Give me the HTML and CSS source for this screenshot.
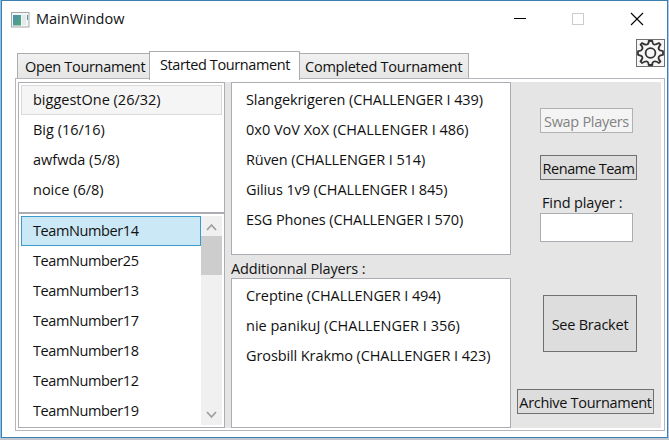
FILE: index.html
```html
<!DOCTYPE html>
<html lang="en">
<head>
<meta charset="utf-8">
<title>MainWindow</title>
<link rel="stylesheet" href="styles.css">
</head>
<body>
<div class="window">
  <header class="titlebar">
    <svg class="app-icon" width="19" height="16" viewBox="0 0 19 16">
      <defs><linearGradient id="g" x1="0" y1="0" x2="1" y2="1"><stop offset="0" stop-color="#4a8fb0"/><stop offset="1" stop-color="#55a878"/></linearGradient></defs>
      <rect x=".5" y=".5" width="17.5" height="14.5" fill="#f4f6f7" stroke="#a3a8ab"/>
      <rect x="2" y="3" width="8" height="10.500" fill="url(#g)"/>
      <rect x="11" y="3" width="4" height="10" fill="#e4e9ee"/>
      <rect x="16" y="3" width="1" height="5" fill="#5b9a8c"/>
    </svg>
    <span class="caption">MainWindow</span>
    <svg class="controls" width="132" height="14" viewBox="0 0 132 14">
      <path d="M1 6.500h12" stroke="#000"/>
      <rect x="59.500" y="1.500" width="11" height="11" fill="none" stroke="#ccc"/>
      <path d="M118 1l12 12M130 1l-12 12" stroke="#000" stroke-width="1.100"/>
    </svg>
  </header>
  <button class="settings" aria-label="Settings">
    <svg width="27" height="26" viewBox="-13.500 -13 27 26">
      <path fill="none" stroke="#333" stroke-width="1.800" stroke-linejoin="round" d="M-1.800 -12H1.800Q2 -9 3.500 -8.500T8.500 -10L10 -8.300Q7.600 -5.500 8.200 -4T12.500 -1.800V1.800Q9 2 8.200 4T10 8.300L8.500 10Q5.500 7.800 3.500 8.500T1.800 12H-1.800Q-2 9 -3.500 8.500T-8.500 10L-10 8.300Q-7.600 5.500 -8.200 4T-12.500 1.800V-1.800Q-9 -2 -8.200 -4T-10 -8.300L-8.500 -10Q-5.500 -7.800 -3.500 -8.500T-1.800 -12Z"/>
      <circle r="4.900" fill="none" stroke="#333" stroke-width="1.800"/>
    </svg>
  </button>
  <nav class="tabs">
    <div class="tab tab-open"><span>Open Tournament</span></div>
    <div class="tab active"><span>Started Tournament</span></div>
    <div class="tab tab-done"><span>Completed Tournament</span></div>
  </nav>
  <main class="panel">
    <div class="content">
      <section class="left">
        <ul class="list tournaments">
          <li class="inactive-selected"><span>biggestOne (26/32)</span></li><li><span>Big (16/16)</span></li><li><span>awfwda (5/8)</span></li><li><span>noice (6/8)</span></li>
        </ul>
        <div class="list teams">
          <ul class="team-items">
            <li class="selected"><span>TeamNumber14</span></li><li><span>TeamNumber25</span></li><li><span>TeamNumber13</span></li><li><span>TeamNumber17</span></li><li><span>TeamNumber18</span></li><li><span>TeamNumber12</span></li><li><span>TeamNumber19</span></li>
          </ul>
          <div class="scrollbar">
            <svg width="21" height="20" viewBox="0 0 21 20"><path d="M6 14l4.500-5 4.500 5" fill="none" stroke="#a0a0a0" stroke-width="1.800"/></svg>
            <div class="thumb"></div>
            <svg class="down" width="21" height="21" viewBox="0 0 21 21"><path d="M6 8l4.500 5 4.500-5" fill="none" stroke="#a0a0a0" stroke-width="1.800"/></svg>
          </div>
        </div>
      </section>
      <section class="middle">
        <ul class="list players">
          <li><span>Slangekrigeren (CHALLENGER I 439)</span></li><li class="wide"><span>0x0 VoV XoX (CHALLENGER I 486)</span></li><li><span>Rüven (CHALLENGER I 514)</span></li><li><span>Gilius 1v9 (CHALLENGER I 845)</span></li><li><span>ESG Phones (CHALLENGER I 570)</span></li>
        </ul>
        <div class="label"><span>Additionnal Players :</span></div>
        <ul class="list extras">
          <li><span>Creptine (CHALLENGER I 494)</span></li><li class="wide"><span>nie panikuJ (CHALLENGER I 356)</span></li><li><span>Grosbill Krakmo (CHALLENGER I 423)</span></li>
        </ul>
      </section>
      <section class="actions">
        <button class="btn swap" disabled><span>Swap Players</span></button>
        <button class="btn rename"><span>Rename Team</span></button>
        <label class="find" for="find"><span>Find player :</span></label>
        <input id="find" class="search" type="text">
        <button class="btn bracket"><span>See Bracket</span></button>
        <button class="btn archive"><span>Archive Tournament</span></button>
      </section>
    </div>
  </main>
</div>
</body>
</html>
```
FILE: styles.css
```css
* { box-sizing: border-box; }
body { margin: 0; width: 669px; height: 440px; overflow: hidden; background: linear-gradient(90deg, #8fc0ea 0 50%, #b3c8e4 50%); padding-left: 1px; border-bottom: 2px solid #c3c5cf; font: 14.5px/20px "Open Sans", "Noto Sans", sans-serif; color: #111; }
button, input { font: inherit; color: inherit; margin: 0; padding: 0; border-radius: 0; }
span { white-space: nowrap; }
ul { list-style: none; margin: 0; padding: 0; }
.window { position: relative; width: 667px; height: 438px; border: 1px solid #3b7fb0; background: #fff; }
.titlebar { display: flex; align-items: center; height: 36px; padding-left: 9px; }
.app-icon { margin-top: 1px; }
.caption { margin-left: 6px; }
.controls { margin-left: auto; margin-right: 22px; }
.settings { position: absolute; left: 634px; top: 38px; width: 29px; height: 28px; border: 1px solid #707070; background: #f6f6f6; display: block; }
.settings svg { display: block; }
.tabs { display: flex; align-items: flex-end; height: 42px; padding-left: 15px; }
.tab { height: 26px; border: 1px solid #acacac; border-bottom: 0; background: linear-gradient(#f1f1f1, #e5e5e5); display: flex; align-items: center; padding: 1px 0 0 7px; }
.tab-open { width: 133px; letter-spacing: -0.32px; }
.active { position: relative; z-index: 1; width: 151px; height: 29px; margin: 0 -1px -1px; background: #fff; padding: 0 0 2px 10px; letter-spacing: -0.4px; }
.tab-done { width: 170px; padding-left: 5px; letter-spacing: -0.23px; }
.panel { margin-left: 13px; margin-top: -1px; width: 650px; height: 353px; border: 1px solid #b5b5bb; padding: 3px 2px; position: relative; }
.content { display: grid; grid-template-columns: 207px 280px 1fr; column-gap: 6px; height: 346px; width: 643px; background: #e5e5e5; }
.list { background: #fff; border: 1px solid #abadb3; padding: 2px; }
.list li { height: 30px; padding: 5px 0 0 12px; }
.left, .middle { display: flex; flex-direction: column; }
.tournaments { height: 131px; }
.list .inactive-selected { background: #f5f5f5; border: 1px solid #dadada; padding: 4px 0 0 11px; }
.teams { display: flex; height: 215px; padding: 2px; overflow: hidden; }
.team-items { width: 180px; letter-spacing: -0.4px; }
.list .selected { background: #cbe8f6; border: 1px solid #3a9bcb; padding: 4px 0 0 11px; }
.scrollbar { width: 21px; height: 209px; background: #f0f0f0; display: flex; flex-direction: column; }
.thumb { height: 39px; background: #cdcdcd; }
.down { margin-top: auto; }
.middle { letter-spacing: -0.1px; }
.wide { letter-spacing: 0; }
.players { height: 173px; }
.label { height: 23px; padding-top: 4px; letter-spacing: -0.16px; }
.extras { height: 149px; height: 150px; }
.actions { display: flex; flex-direction: column; align-items: flex-start; padding: 26px 0 0 23px; }
.btn { display: flex; align-items: center; justify-content: center; height: 25px; border: 1px solid #707070; background: #ddd; padding-top: 2px; letter-spacing: -0.3px; }
.swap { width: 93px; background: #f4f4f4; border-color: #adb2b5; color: #838383; }
.rename { width: 97px; margin-top: 22px; letter-spacing: -0.47px; }
.find { margin: 13px 0 0 2px; height: 20px; letter-spacing: -0.13px; }
.search { width: 93px; height: 29px; border: 1px solid #abadb3; background: #fff; }
.bracket { width: 94px; height: 57px; margin: 53px 0 0 3px; letter-spacing: -0.23px; }
.archive { width: 137px; margin: 37px 0 0 -23px; }
```
